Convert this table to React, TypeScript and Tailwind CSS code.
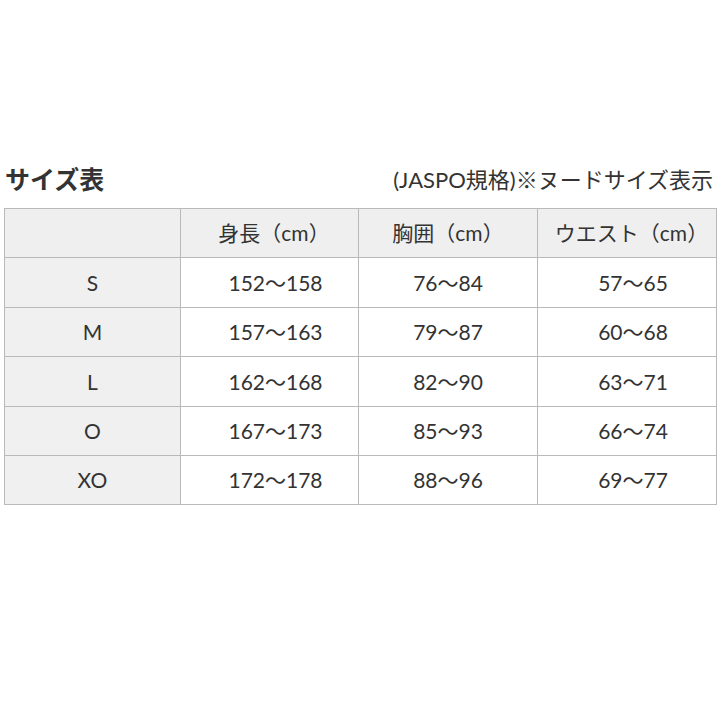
const header = ["", "身長（cm）", "胸囲（cm）", "ウエスト（cm）"];

const rows = [
  ["S", "152〜158", "76〜84", "57〜65"],
  ["M", "157〜163", "79〜87", "60〜68"],
  ["L", "162〜168", "82〜90", "63〜71"],
  ["O", "167〜173", "85〜93", "66〜74"],
  ["XO", "172〜178", "88〜96", "69〜77"],
];

const font = "font-['Lato','Noto_Sans_CJK_JP',sans-serif]";

export default function App() {
  return (
    <div className={`h-[720px] w-[720px] bg-white text-[#333] ${font}`}>
      <div className="flex items-end justify-between pl-[5px] pr-[7px] pt-[162px]">
        <h2 className="text-[25px] font-bold leading-[34px] text-[#333]">サイズ表</h2>
        <p className="text-[22px] leading-[32px]">(JASPO規格)※ヌードサイズ表示</p>
      </div>

      <div className="ml-[4px] mt-[12px] grid w-[713px] grid-cols-[176px_178px_179px_1fr] border-l border-t border-[#b9b9b9] text-[21px]">
        {header.map((h, i) => (
          <div
            key={i}
            className="flex h-[49.4px] items-center justify-center border-b border-r border-[#b9b9b9] bg-[#efefef]"
          >
            <span className={i === 1 || i === 3 ? "pl-[9px]" : ""}>{h}</span>
          </div>
        ))}
        {rows.map((r) =>
          r.map((cell, i) => (
            <div
              key={r[0] + i}
              className={
                i === 0
                  ? "flex h-[49.4px] items-center justify-center border-b border-r border-[#b9b9b9] bg-[#f0f0f0]"
                  : "flex h-[49.4px] items-center justify-center border-b border-r border-[#b9b9b9] bg-white"
              }
            >
              <span className={i === 1 || i === 3 ? "pl-[12px]" : ""}>{cell}</span>
            </div>
          )),
        )}
      </div>
    </div>
  );
}
